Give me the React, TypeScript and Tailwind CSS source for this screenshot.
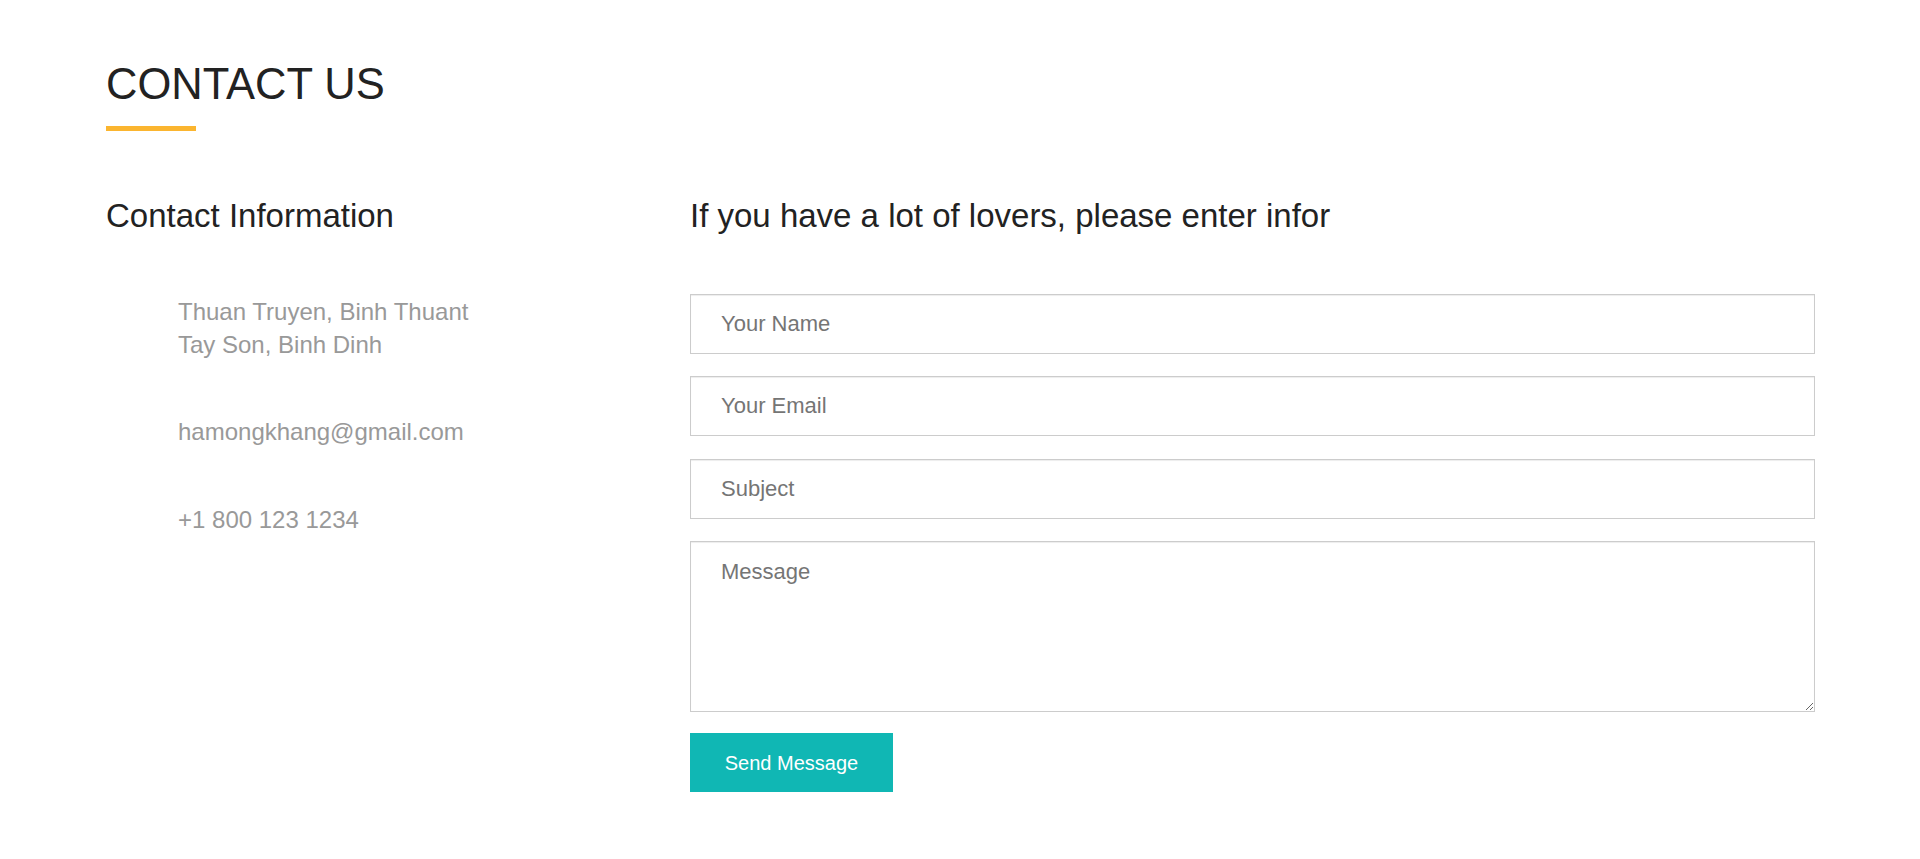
import { useState } from 'react'

const info = [
  ['Thuan Truyen, Binh Thuant', 'Tay Son, Binh Dinh'],
  ['hamongkhang@gmail.com'],
  ['+1 800 123 1234'],
]

export default function App() {
  const [form, setForm] = useState({ name: '', email: '', subject: '', message: '' })

  const field =
    'block h-[60px] w-full border border-[#cccccc] bg-white px-[30px] text-[22px] text-[#555] shadow-[inset_0_1px_1px_rgba(0,0,0,0.075)] outline-none placeholder:text-[#757575]'

  return (
    <div className="min-h-screen bg-white font-['Liberation_Sans',Arial,sans-serif]">
      <div className="pl-[106px] pr-[105px] pt-[63px]">
        {/* Section title */}
        <h2 className="text-[43.5px] leading-none text-[#222]">CONTACT US</h2>
        <div className="mt-[19.5px] h-[5px] w-[90px] bg-[#fbb52f]" />

        <div className="mt-[68px] flex">
          {/* Contact information */}
          <div className="w-[584px] shrink-0">
            <h3 className="text-[33px] leading-none text-[#222]">Contact Information</h3>
            <div className="mt-[62.5px] flex flex-col gap-[54.5px] pl-[72px]">
              {info.map((lines, i) => (
                <div key={i} className="text-[24px] leading-[33px] text-[#999]">
                  {lines.map((l) => (
                    <div key={l}>{l}</div>
                  ))}
                </div>
              ))}
            </div>
          </div>

          {/* Form */}
          <div className="w-[1125px] shrink-0">
            <h3 className="text-[33px] leading-none text-[#222]">
              If you have a lot of lovers, please enter infor
            </h3>
            <form
              className="mt-[62px] flex flex-col gap-[22.4px]"
              onSubmit={(e) => e.preventDefault()}
            >
              <input
                className={field}
                placeholder="Your Name"
                value={form.name}
                onChange={(e) => setForm({ ...form, name: e.target.value })}
              />
              <input
                className={field}
                placeholder="Your Email"
                value={form.email}
                onChange={(e) => setForm({ ...form, email: e.target.value })}
              />
              <input
                className={field}
                placeholder="Subject"
                value={form.subject}
                onChange={(e) => setForm({ ...form, subject: e.target.value })}
              />
              <textarea
                className="block h-[171px] w-full border border-[#cccccc] bg-white px-[30px] py-[14px] text-[22px] leading-[31px] text-[#555] shadow-[inset_0_1px_1px_rgba(0,0,0,0.075)] outline-none placeholder:text-[#757575]"
                placeholder="Message"
                value={form.message}
                onChange={(e) => setForm({ ...form, message: e.target.value })}
              />
              <button
                type="submit"
                className="-mt-[1.5px] h-[59px] w-[203px] bg-[#10b7b4] text-[20px] text-white"
              >
                Send Message
              </button>
            </form>
          </div>
        </div>
      </div>
    </div>
  )
}
